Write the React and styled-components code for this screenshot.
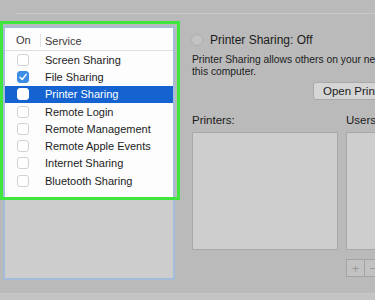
import React from 'react'
import styled, { createGlobalStyle } from 'styled-components'

const services = [
  { name: 'Screen Sharing', on: false },
  { name: 'File Sharing', on: true },
  { name: 'Printer Sharing', on: false, selected: true },
  { name: 'Remote Login', on: false },
  { name: 'Remote Management', on: false },
  { name: 'Remote Apple Events', on: false },
  { name: 'Internet Sharing', on: false },
  { name: 'Bluetooth Sharing', on: false }
]

const Global = createGlobalStyle`
  html, body {
    margin: 0;
    padding: 0;
    background: #bababa;
  }
  body {
    font-family: "Liberation Sans", Arial, sans-serif;
    color: #1c1c1c;
  }
`

export default function App () {
  return (
    <Window>
      <Global />
      <TopBar />
      <Body>
        <LeftCol>
          <ListPanel>
            <ListWhite>
              <Header>
                <HeadOn>On</HeadOn>
                <HeadService>Service</HeadService>
              </Header>
              {services.map(s => (
                <Row key={s.name} selected={s.selected}>
                  <Check on={s.on} selected={s.selected}>
                    {s.on && (
                      <svg width="10" height="10" viewBox="0 0 10 10">
                        <polyline points="2,5.2 4.2,7.5 8.2,2.4" fill="none" stroke="#fff" strokeWidth="1.4" strokeLinecap="round" strokeLinejoin="round" />
                      </svg>
                    )}
                  </Check>
                  <Name>{s.name}</Name>
                </Row>
              ))}
            </ListWhite>
          </ListPanel>
        </LeftCol>
        <RightCol>
          <StatusRow>
            <Radio />
            <Title>Printer Sharing: Off</Title>
          </StatusRow>
          <Desc>
            Printer Sharing allows others on your network to use printers connected to<br />
            this computer.
          </Desc>
          <OpenButton>Open Printers Preferences…</OpenButton>
          <Columns>
            <Column>
              <Label>Printers:</Label>
              <Box />
            </Column>
            <Column>
              <Label>Users:</Label>
              <Box />
              <PlusMinus>
                <SmallBtn>+</SmallBtn>
                <SmallBtn>−</SmallBtn>
              </PlusMinus>
            </Column>
          </Columns>
        </RightCol>
      </Body>
      <BottomBar />
      <Highlight />
    </Window>
  )
}

const Window = styled.div`
  position: relative;
  width: 375px;
  height: 300px;
  overflow: hidden;
  background: #bababa;
  display: flex;
  flex-direction: column;
`
const TopBar = styled.div`
  height: 13px;
  margin-left: 15px;
  border-bottom: 1px solid #c9c9c9;
  flex-shrink: 0;
`
const Body = styled.div`
  display: flex;
  gap: 17px;
  height: 279px;
  flex-shrink: 0;
`
const LeftCol = styled.div`
  width: 175px;
  flex-shrink: 0;
  padding: 12px 0 0 3px;
  box-sizing: border-box;
`
const ListPanel = styled.div`
  height: 254px;
  box-sizing: border-box;
  border: 2px solid #a5bcd9;
  background: #cdcdcd;
`
const ListWhite = styled.div`
  height: 169px;
  background: #fdfdfd;
`
const Header = styled.div`
  height: 23px;
  padding-top: 3px;
  box-sizing: border-box;
  display: flex;
  align-items: center;
  border-bottom: 1px solid #dedede;
  font-size: 11px;
  color: #3a3a3a;
`
const HeadOn = styled.div`
  width: 36px;
  padding-left: 11px;
  box-sizing: border-box;
  border-right: 1px solid #e2e2e2;
  line-height: 13px;
`
const HeadService = styled.div`
  padding-left: 4px;
`
const Row = styled.div`
  height: 17.3px;
  display: flex;
  align-items: center;
  background: ${p => p.selected ? '#1463d1' : 'transparent'};
  color: ${p => p.selected ? '#ffffff' : '#1c1c1c'};
`
const Check = styled.div`
  width: 12px;
  height: 12px;
  margin-left: 12px;
  box-sizing: border-box;
  border-radius: 3px;
  border: 1px solid ${p => p.on ? '#3a8ce4' : p.selected ? '#ffffff' : '#d2d2d2'};
  background: ${p => p.on ? '#3b8de6' : '#ffffff'};
  display: flex;
  align-items: center;
  justify-content: center;
`
const Name = styled.div`
  margin-left: 16px;
  font-size: 11px;
  white-space: nowrap;
`
const RightCol = styled.div`
  flex: 1;
  min-width: 0;
  padding-top: 18px;
  white-space: nowrap;
`
const StatusRow = styled.div`
  display: flex;
  align-items: center;
  height: 16px;
`
const Radio = styled.div`
  width: 10px;
  height: 10px;
  margin-left: -1px;
  border-radius: 50%;
  background: #c3c3c3;
  border: 1px solid #b0b0b0;
`
const Title = styled.div`
  margin-left: 7px;
  font-size: 12px;
  color: #1a1a1a;
`
const Desc = styled.div`
  margin-top: 6px;
  font-size: 10.3px;
  line-height: 11.5px;
  color: #1c1c1c;
`
const OpenButton = styled.div`
  margin: 5px 0 0 121px;
  height: 18px;
  width: max-content;
  box-sizing: border-box;
  padding: 0 9px;
  display: flex;
  align-items: center;
  font-size: 11.5px;
  background: #d5d5d5;
  border: 1px solid #a9a9a9;
  border-radius: 3px;
`
const Columns = styled.div`
  display: grid;
  grid-template-columns: 146px 160px;
  gap: 8px;
  margin-top: 13px;
`
const Column = styled.div`
  display: flex;
  flex-direction: column;
`
const Label = styled.div`
  font-size: 11.5px;
  height: 14px;
  line-height: 14px;
`
const Box = styled.div`
  margin-top: 5px;
  height: 118px;
  box-sizing: border-box;
  background: #cecece;
  border: 1px solid #a8a8a8;
`
const PlusMinus = styled.div`
  display: flex;
  margin-top: 9px;
`
const SmallBtn = styled.div`
  width: 19px;
  height: 18px;
  box-sizing: border-box;
  border: 1px solid #a3a3a3;
  margin-right: -1px;
  display: flex;
  align-items: center;
  justify-content: center;
  font-size: 13px;
  color: #9a9a9a;
  background: #c2c2c2;
`
const BottomBar = styled.div`
  flex: 1;
  background: #c4c4c4;
  border-top: 1px solid #c9c9c9;
`
const Highlight = styled.div`
  position: absolute;
  left: 0;
  top: 21px;
  width: 180px;
  height: 179px;
  box-sizing: border-box;
  border: 3.5px solid #3ee63e;
  pointer-events: none;
`
